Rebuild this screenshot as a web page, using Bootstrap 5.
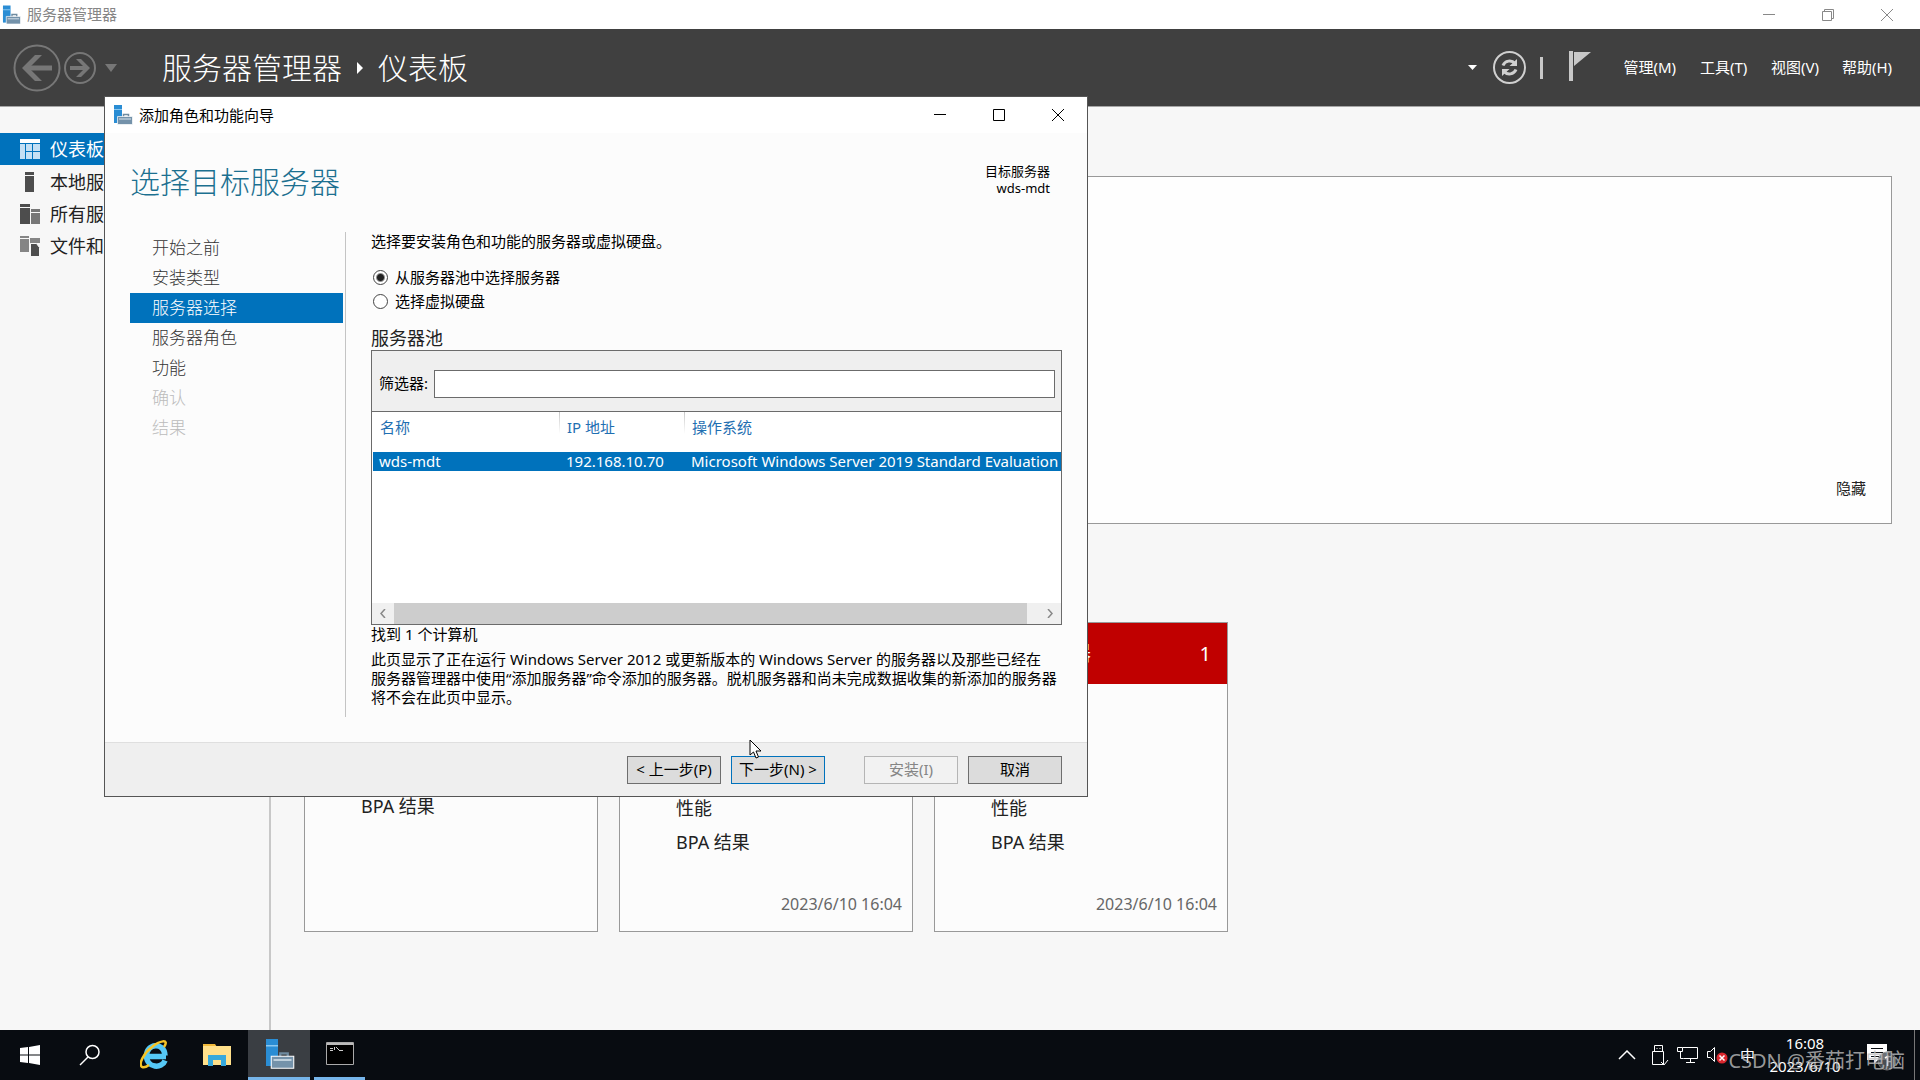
<!DOCTYPE html>
<html lang="zh-CN">
<head>
<meta charset="utf-8">
<meta name="viewport" content="width=device-width, initial-scale=1">
<title>服务器管理器</title>
<link href="https://cdn.jsdelivr.net/npm/bootstrap@5.3.0/dist/css/bootstrap.min.css" rel="stylesheet">
<style>
  body { font-family: "Noto Sans", "Noto Sans CJK SC", sans-serif; font-size: 15px; line-height: 19px; color: #222; background: #f7f7f7; }
  a, a:hover { color: inherit; text-decoration: none; }
  svg { display: block; flex: none; }
  button { padding: 0; border: 0; background: none; color: inherit; font-size: 15px; line-height: 19px; }
  .desktop { height: 100vh; min-height: 760px; overflow: hidden; }

  .app-title { height: 29px; background: #fff; color: #868686; padding-left: 2px; gap: 6px; }
  .win-btns button { width: 59px; display: flex; justify-content: center; }
  .app-head { height: 78px; background: #404040; border-bottom: 1px solid #a6a6a6; color: #fff; padding-left: 13px; }
  .crumbs { font-size: 30px; line-height: 40px; font-weight: 300; margin-left: 45px; gap: 15px; }
  .head-menu { gap: 20px; margin-left: 32px; margin-right: 27px; }
  .head-menu a:first-child { margin-right: 4px; }
  .head-menu a { min-width: 51px; }
  .head-sep { width: 3px; height: 22px; background: #c8c8c8; margin: 0 26px 0 14px; }

  .side { width: 271px; border-right: 2px solid #c8c8c8; padding-top: 26px; font-size: 18px; }
  .side a { height: 32px; padding-left: 18px; gap: 10px; display: flex; align-items: center; }
  .side a.active { background: #0072bc; color: #fff; margin-bottom: 1px; }
  .dash { padding: 69px 28px 0 33px; }
  .welcome { height: 348px; border: 1px solid #999; background: #fefefe; padding: 0 25px 25px; }
  .tiles { margin-top: 98px; gap: 21px; }
  .tile { width: 294px; height: 310px; border: 1px solid #999; background: #fcfcfc; font-size: 18px; }
  .tile-head { height: 61px; padding: 0 16px 0 56px; font-size: 20px; }
  .tile-head.alerting { background: #c00000; color: #fff; }
  .tile-rows { padding: 0 56px 12px; line-height: 34px; }
  .tile time { font-size: 16px; color: #666; padding: 0 10px 17px; }

  .wizard { left: 104px; top: 96px; width: 984px; height: 701px; background: #fcfcfc; border: 1px solid #555; color: #000; }
  .wiz-title { height: 36px; background: #fff; padding-left: 8px; gap: 6px; }
  .wiz-head { padding: 26px 37px 0 25px; height: 99px; }
  .wiz-head h1 { font-size: 30px; line-height: 46px; font-weight: 300; color: #1c7090; margin: 0; }
  .wiz-target { font-size: 13px; line-height: 17px; padding-top: 4px; }
  .steps { width: 241px; padding: 1px 2px 0 25px; border-right: 1px solid #c4c4c4; margin-bottom: 25px; font-size: 17px; font-weight: 300; }
  .steps a { display: block; line-height: 30px; padding-left: 22px; color: #333; }
  .steps a.active { background: #0072bc; color: #fff; }
  .steps a.off { color: #bbb; }
  .wiz-main { padding: 0 25px; min-width: 0; }
  .intro { margin-bottom: 14px; }
  .pick { gap: 7px; height: 24px; }
  .pick input { appearance: none; width: 15px; height: 15px; margin: 0 0 0 2px; border: 1px solid #444; border-radius: 50%; background: #fff; }
  .pick input:checked { background: radial-gradient(circle, #222 0 3px, #fff 5px); }
  .pool-name { font-size: 18px; line-height: 24px; font-weight: 400; color: #222; margin: 13px 0 0; }
  .pool { border: 1px solid #6b6b6b; height: 275px; background: #fff; }
  .filter { height: 61px; padding: 5px 6px 0 7px; gap: 6px; background: #efefef; border-bottom: 1px solid #6b6b6b; }
  .filter input { height: 28px; min-width: 0; border: 1px solid #6b6b6b; border-radius: 0; background: #fff; }
  .srv-list { overflow: hidden; padding-left: 1px; }
  .srv-list table { table-layout: fixed; width: 800px; border-collapse: collapse; }
  .srv-list th { font-weight: 400; color: #1f6fb2; height: 40px; padding: 6px 0 0 7px; vertical-align: top; background: linear-gradient(#c8c8c8, #fff) right top / 1px 22px no-repeat; }
  .srv-list th:last-child { background: none; }
  .srv-list td { background: #0072bc; color: #fff; padding: 0 0 0 6px; white-space: nowrap; line-height: 19px; }
  .hbar { height: 21px; background: #f0f0f0; }
  .hbar button { width: 22px; display: flex; justify-content: center; align-items: center; }
  .hbar .thumb { background: #cdcdcd; margin-right: 12px; }
  .note { margin: 6px 0 0; white-space: nowrap; }
  .wiz-foot { height: 54px; background: #efefef; border-top: 1px solid #dfdfdf; padding: 0 25px 0 0; gap: 10px; }
  .cmd { width: 94px; height: 28px; border: 1px solid #6e6e6e; background: #dcdcdc; border-radius: 0; }
  .cmd.primary { border-color: #0072bc; }
  .cmd:disabled { background: #f2f2f2; border-color: #b5b5b5; color: #858585; }
  .cmd.apart { margin-left: 29px; }
  .pointer { left: 749px; top: 739px; }

  .taskbar { height: 50px; background: #080c11; color: #fff; }
  .taskbar .slot { width: 62px; height: 50px; display: flex; align-items: center; justify-content: center; }
  .taskbar .slot.lead-slot { width: 60px; }
  .slot.open { border-bottom: 3px solid #76b5ea; }
  .slot.front { background: #3a3e43; }
  .taskbar .slot.small-slot { width: 51px; }
  .clock { width: 80px; line-height: 23px; text-align: center; }
  .peek { width: 6px; border-left: 1px solid #777; height: 50px; }
  .csdn { right: 15px; bottom: 5px; font-size: 20px; line-height: 28px; color: rgba(190,190,190,.8); pointer-events: none; }
</style>
<script src="https://cdn.jsdelivr.net/npm/bootstrap@5.3.0/dist/js/bootstrap.bundle.min.js"></script>
</head>
<body>
<svg width="0" height="0" class="position-absolute" aria-hidden="true">
  <symbol id="srv" viewBox="0 0 20 20">
    <path fill="#2a8dd4" d="M1 0h8v18H1z"/><path stroke="#8cc8f0" d="M1 4.500h8"/>
    <path fill="none" stroke="#6f8ba0" stroke-width="1.500" d="M10.500 12V9.500h5V12"/>
    <path fill="#7492aa" stroke="#fff" stroke-width=".7" d="M4.500 11.500h15v8h-15z"/><path stroke="#d8e4ec" d="M6 14h12"/>
  </symbol>
</svg>
<div class="desktop d-flex flex-column position-relative">
  <div class="app-title d-flex align-items-center">
    <svg width="19" height="20"><use href="#srv"/></svg>
    <span class="flex-grow-1 lh-1">服务器管理器</span>
    <div class="win-btns d-flex pe-1">
      <button aria-label="最小化"><svg width="12" height="12"><path stroke="#888" d="M0 5.500h12"/></svg></button>
      <button aria-label="还原"><svg width="12" height="12" fill="none" stroke="#888"><path d="M.5 2.500h9v9h-9zM2.500 2.500v-2h9v9h-2"/></svg></button>
      <button aria-label="关闭"><svg width="12" height="12"><path stroke="#888" d="M0 0l12 12M12 0L0 12"/></svg></button>
    </div>
  </div>

  <header class="app-head d-flex align-items-center">
    <button aria-label="后退"><svg width="50" height="48" fill="none" stroke="#777"><circle cx="24" cy="24" r="22.500" stroke-width="2"/><path stroke-width="5" d="M39 24H13"/><path fill="#777" stroke="none" d="M9 24l13-13h7L16 24l13 13h-7z"/></svg></button>
    <button aria-label="前进"><svg width="34" height="34" fill="none" stroke="#777"><circle cx="17" cy="17" r="15" stroke-width="2"/><path stroke-width="4" d="M7 17h17"/><path fill="#777" stroke="none" d="M27 17l-9-9h-5l9 9-9 9h5z"/></svg></button>
    <button class="ms-2" aria-label="历史记录"><svg width="12" height="8"><path fill="#777" d="M0 0h12L6 8z"/></svg></button>
    <nav class="crumbs d-flex align-items-center flex-grow-1">
      <a href="#">服务器管理器</a>
      <svg width="6" height="12"><path fill="#fff" d="M0 0l6 6-6 6z"/></svg>
      <a href="#">仪表板</a>
    </nav>
    <button class="me-3" aria-label="刷新选项"><svg width="9" height="5"><path fill="#fff" d="M0 0h9L4.500 5z"/></svg></button>
    <button aria-label="刷新"><svg width="33" height="33" fill="none" stroke="#d0d0d0"><circle cx="16.500" cy="16.500" r="15.500" stroke-width="2"/><path stroke-width="3" d="M10 14.500c2-5 8.500-6 12-2M23 18.500c-2 5-8.500 6-12 2"/><path fill="#d0d0d0" stroke="none" d="M24 8v7h-7.500zM9 25v-7h7.500z"/></svg></button>
    <span class="head-sep"></span>
    <button aria-label="通知"><svg width="22" height="34"><path fill="#c8c8c8" d="M0 0h4v30H0zM5 1h17L5 15z"/></svg></button>
    <nav class="head-menu d-flex">
      <a href="#">管理(M)</a><a href="#">工具(T)</a><a href="#">视图(V)</a><a href="#">帮助(H)</a>
    </nav>
  </header>

  <div class="d-flex flex-grow-1 overflow-hidden">
    <nav class="side flex-shrink-0">
      <a href="#" class="active"><svg width="22" height="20"><path fill="#fff" d="M2 0h20v4H2z"/><path fill="#c5e0f4" d="M2 5h5v15H2zM8 5h6v7H8zM15 5h7v7h-7zM8 13h6v7H8zM15 13h7v7h-7z"/></svg>仪表板</a>
      <a href="#"><svg width="22" height="20" fill="#4d4d4d"><path d="M7 0h9v3H7zM7 4h9v16H7z"/></svg>本地服务器</a>
      <a href="#"><svg width="22" height="20"><path fill="#4d4d4d" d="M2 0h10v3H2zM2 4h10v16H2z"/><path fill="#777" d="M13 5h9v3h-9zM13 9h9v11h-9z"/></svg>所有服务器</a>
      <a href="#"><svg width="22" height="20"><path fill="#858585" d="M2 0h9v2H2zM2 3h9v13H2zM12 2h10v5H12z"/><path fill="#4d4d4d" stroke="#f7f7f7" d="M12.500 7.500h6l3 4v9h-9z"/></svg>文件和存储服务</a>
    </nav>
    <main class="dash flex-grow-1">
      <section class="welcome d-flex justify-content-end align-items-end"><a href="#">隐藏</a></section>
      <section class="tiles d-flex">
        <article class="tile d-flex flex-column"><div class="tile-head"></div>
          <div class="tile-rows mt-auto mb-5"><div class="pb-5">BPA 结果</div></div></article>
        <article class="tile d-flex flex-column"><div class="tile-head"></div>
          <div class="tile-rows mt-auto mb-4"><div>性能</div><div>BPA 结果</div></div>
          <time class="text-end">2023/6/10 16:04</time></article>
        <article class="tile d-flex flex-column"><div class="tile-head alerting d-flex align-items-center justify-content-between"><span>所有服务器</span><span>1</span></div>
          <div class="tile-rows mt-auto mb-4"><div>性能</div><div>BPA 结果</div></div>
          <time class="text-end">2023/6/10 16:04</time></article>
      </section>
    </main>
  </div>

  <footer class="taskbar d-flex align-items-center flex-shrink-0">
    <button class="slot lead-slot" aria-label="开始"><svg width="20" height="20" fill="#fff"><path d="M0 3l8-1v7.500H0zM9 2l11-2v9.500H9zM0 10.500h8V18l-8-1zM9 10.500h11V20L9 18z"/></svg></button>
    <button class="slot lead-slot" aria-label="搜索"><svg width="22" height="22" fill="none" stroke="#fff" stroke-width="1.500"><circle cx="13.500" cy="8" r="6.500"/><path d="M9 13l-8 8"/></svg></button>
    <button class="slot ms-1" aria-label="Internet Explorer"><svg width="30" height="30" fill="none"><path stroke="#55c8f5" stroke-width="5.500" d="M7 16.500h19M25 15.500C24.500 1.500 6 3 6.500 16.500c.5 11.500 15.500 12.500 18.500 4"/><path stroke="#f6c426" stroke-width="2.500" d="M24 7c6-9-5-6-12 0C4 13-2 24 2 27c2 1 5-.5 7-2"/></svg></button>
    <button class="slot" aria-label="文件资源管理器"><svg width="28" height="24"><path fill="#f0b93a" d="M0 1h12l2 3H0z"/><path fill="#ffe08a" d="M0 3h28v19H0z"/><path fill="#36a9dc" d="M5 12h18v11h-5v-6h-8v6H5z"/></svg></button>
    <button class="slot open front" aria-label="服务器管理器"><svg width="31" height="30"><use href="#srv"/></svg></button>
    <button class="slot open small-slot ms-1" aria-label="命令提示符"><svg width="28" height="23"><path fill="#000" stroke="#aaa" d="M.5.500h27v22H.5z"/><path fill="#bbb" d="M1 1h26v2H1z"/><path stroke="#ccc" d="M4 6.500h3M8.500 5v3M10 5l3 3M13 8.500h4M4 8.500h3"/></svg></button>
    <div class="ms-auto d-flex align-items-center">
      <button aria-label="隐藏的图标"><svg width="18" height="10" fill="none" stroke="#fff" stroke-width="1.500"><path d="M1 9l8-8 8 8"/></svg></button>
      <svg class="ms-3" width="17" height="21" fill="none" stroke="#fff"><path d="M2.500 6.500v-6h8v6M.5 6.500h11v13h-11zM4.500 3.500h1M7.500 3.500h1"/><path d="M9 17l3 3 4-5"/></svg>
      <svg class="ms-2" width="22" height="18" fill="none" stroke="#fff"><path d="M5.500 1.500h15v11h-14M.5 1.500h5v4h-5zM3.500 5.500v7h3M13.500 13v3M9 16.500h9"/></svg>
      <svg class="ms-2" width="21" height="20"><path fill="none" stroke="#fff" d="M.5 6.500h3l4-4v14l-4-4h-3z"/><circle cx="15" cy="13" r="5.500" fill="#d9272e"/><path stroke="#fff" stroke-width="1.500" d="M12.500 10.500l5 5M17.500 10.500l-5 5"/></svg>
      <span class="ms-2 ps-1">中</span>
      <div class="clock ms-2 ps-1"><div>16:08</div><div>2023/6/10</div></div>
      <button class="ms-3" aria-label="通知中心"><svg width="39" height="34"><path fill="#fff" d="M8 6h20v16h-9l-4 4v-4H8z"/><path stroke="#080c11" d="M12 10.500h12M12 14.500h12M12 18.500h8"/><circle cx="28" cy="23" r="9" fill="#555a60" stroke="#888" opacity=".85"/><path fill="none" stroke="#fff" stroke-width="1.500" d="M26 20l2.500-1.500V28"/></svg></button>
      <span class="peek ms-3"></span>
    </div>
  </footer>

  <section class="wizard position-absolute d-flex flex-column" role="dialog" aria-labelledby="wt">
    <div class="wiz-title d-flex align-items-center flex-shrink-0">
      <svg width="20" height="20"><use href="#srv"/></svg>
      <span id="wt" class="flex-grow-1">添加角色和功能向导</span>
      <div class="win-btns d-flex">
        <button aria-label="最小化"><svg width="12" height="12"><path stroke="#000" d="M0 5.500h12"/></svg></button>
        <button aria-label="最大化"><svg width="12" height="12"><path fill="none" stroke="#000" d="M.5.500h11v11H.5z"/></svg></button>
        <button aria-label="关闭"><svg width="12" height="12"><path stroke="#000" d="M0 0l12 12M12 0L0 12"/></svg></button>
      </div>
    </div>
    <div class="wiz-head d-flex justify-content-between flex-shrink-0">
      <h1>选择目标服务器</h1>
      <div class="wiz-target text-end">目标服务器<br>wds-mdt</div>
    </div>
    <div class="d-flex flex-grow-1">
      <nav class="steps flex-shrink-0">
        <a href="#">开始之前</a><a href="#">安装类型</a><a href="#" class="active">服务器选择</a><a href="#">服务器角色</a><a href="#">功能</a><a class="off">确认</a><a class="off">结果</a>
      </nav>
      <div class="wiz-main flex-grow-1">
        <p class="intro">选择要安装角色和功能的服务器或虚拟硬盘。</p>
        <label class="pick d-flex align-items-center"><input type="radio" name="src" checked>从服务器池中选择服务器</label>
        <label class="pick d-flex align-items-center"><input type="radio" name="src">选择虚拟硬盘</label>
        <h2 class="pool-name">服务器池</h2>
        <div class="pool d-flex flex-column">
          <div class="filter d-flex align-items-center flex-shrink-0">
            <label for="flt" class="text-nowrap">筛选器:</label><input id="flt" type="text" class="flex-grow-1">
          </div>
          <div class="srv-list flex-grow-1">
            <table>
              <colgroup><col style="width:187px"><col style="width:125px"><col></colgroup>
              <thead><tr><th>名称</th><th>IP 地址</th><th>操作系统</th></tr></thead>
              <tbody><tr><td>wds-mdt</td><td>192.168.10.70</td><td>Microsoft Windows Server 2019 Standard Evaluation</td></tr></tbody>
            </table>
          </div>
          <div class="hbar d-flex flex-shrink-0">
            <button aria-label="向左"><svg width="6" height="9" fill="none" stroke="#888" stroke-width="1.500"><path d="M5 0L1 4.500 5 9"/></svg></button>
            <div class="thumb flex-grow-1"></div>
            <button aria-label="向右"><svg width="6" height="9" fill="none" stroke="#888" stroke-width="1.500"><path d="M1 0l4 4.500L1 9"/></svg></button>
          </div>
        </div>
        <p class="mb-0">找到 1 个计算机</p>
        <p class="note">此页显示了正在运行 Windows Server 2012 或更新版本的 Windows Server 的服务器以及那些已经在<br>服务器管理器中使用“添加服务器”命令添加的服务器。脱机服务器和尚未完成数据收集的新添加的服务器<br>将不会在此页中显示。</p>
      </div>
    </div>
    <div class="wiz-foot d-flex align-items-center justify-content-end flex-shrink-0">
      <button class="cmd">&lt; 上一步(P)</button>
      <button class="cmd primary">下一步(N) &gt;</button>
      <button class="cmd apart" disabled>安装(I)</button>
      <button class="cmd">取消</button>
    </div>
  </section>
  <svg class="pointer position-absolute" width="14" height="20"><path fill="#fff" stroke="#000" d="M1 1v15l3.500-3 2.500 6 2.500-1-2.500-6H12z"/></svg>
  <div class="csdn position-absolute">CSDN @番茄打电脑</div>
</div>
</body>
</html>
